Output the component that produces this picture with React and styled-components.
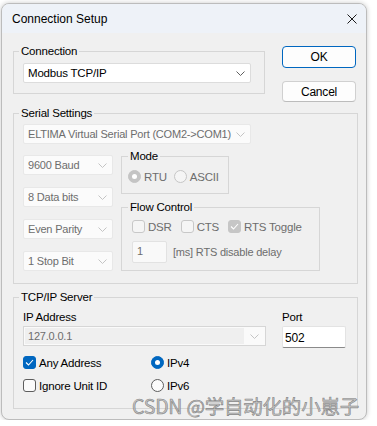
import React from "react";
import styled, { createGlobalStyle } from "styled-components";

const GlobalStyle = createGlobalStyle`
  html, body {
    margin: 0;
    padding: 0;
    background: #ffffff;
  }
  body {
    font-family: "Liberation Sans", Arial, sans-serif;
    font-size: 11px;
    letter-spacing: -0.2px;
    color: #000;
  }
`;

const Window = styled.div`
  position: relative;
  box-sizing: border-box;
  width: 366px;
  height: 417px;
  margin: 3px 0 0 1px;
  border: 1px solid #bcbcbc;
  border-radius: 8px;
  overflow: hidden;
  background: #f0f0f0;
  box-shadow: 0 0 5px rgba(0, 0, 0, 0.22);
`;

const TitleBar = styled.div`
  height: 29px;
  display: flex;
  align-items: center;
  justify-content: space-between;
  padding: 0 9px 0 10px;
  background: #eef2f8;
  font-size: 12px;
  letter-spacing: 0;
`;

const Body = styled.div`
  padding: 11px 0 0 11px;
`;

const TopRow = styled.div`
  display: flex;
  align-items: flex-start;
`;

const Group = styled.fieldset`
  box-sizing: border-box;
  width: ${(p) => p.$w}px;
  margin: ${(p) => p.$mt || 0}px 0 0 0;
  padding: ${(p) => p.$pt || 0}px 0 ${(p) => p.$pb || 0}px ${(p) => p.$pl || 9}px;
  min-width: 0;
  border: 1px solid #d6d6d6;
  border-radius: 0;
`;

const Legend = styled.legend`
  padding: 0 2px;
  margin-left: ${(p) => (p.$ml === undefined ? -4 : p.$ml)}px;
  line-height: 14px;
  font-size: 11.5px;
`;

const Combo = styled.div`
  box-sizing: border-box;
  width: ${(p) => p.$w}px;
  height: 20px;
  display: flex;
  align-items: center;
  justify-content: space-between;
  padding: 0 5px 0 4px;
  background: ${(p) => (p.$disabled ? "#fbfbfb" : "#ffffff")};
  border: 1px solid ${(p) => (p.$disabled ? "#e8e8e8" : "#dcdcdc")};
  border-radius: 2px;
  color: ${(p) => (p.$disabled ? "#6d6d6d" : "#000")};
  font-size: ${(p) => (p.$disabled ? 11 : 11.5)}px;
  white-space: nowrap;
`;

const Buttons = styled.div`
  display: flex;
  flex-direction: column;
  margin-left: 17px;
`;

const Button = styled.div`
  box-sizing: border-box;
  width: 74px;
  height: ${(p) => (p.$primary ? 22 : 21)}px;
  margin-top: ${(p) => (p.$primary ? 2 : 13)}px;
  display: flex;
  align-items: center;
  justify-content: center;
  background: #fdfdfd;
  border: 1px solid ${(p) => (p.$primary ? "#0067c0" : "#d0d0d0")};
  border-bottom-color: ${(p) => (p.$primary ? "#0067c0" : "#bcbcbc")};
  border-radius: 4px;
  font-size: 12px;
`;

const SerialRow = styled.div`
  display: flex;
  align-items: flex-start;
  gap: 8px;
  margin-top: 5px;
`;

const ComboColumn = styled.div`
  display: flex;
  flex-direction: column;
  gap: 12px;
  margin-top: 6px;
`;

const RightColumn = styled.div`
  display: flex;
  flex-direction: column;
`;

const OptionRow = styled.div`
  display: flex;
  align-items: center;
  height: 13px;
`;

const Option = styled.label`
  display: flex;
  align-items: center;
  gap: 3px;
  margin-right: ${(p) => p.$mr || 0}px;
  color: ${(p) => (p.$disabled ? "#6d6d6d" : "#000")};
  font-size: 11.5px;
  white-space: nowrap;
`;

const CheckBox = styled.span`
  box-sizing: border-box;
  width: 13px;
  height: 13px;
  border-radius: 3px;
  display: flex;
  align-items: center;
  justify-content: center;
  border: 1px solid
    ${(p) => (p.$checked ? (p.$disabled ? "#c6c6c6" : "#0067c0") : p.$disabled ? "#c8c8c8" : "#5d5d5d")};
  background: ${(p) => (p.$checked ? (p.$disabled ? "#c6c6c6" : "#0067c0") : p.$disabled ? "#f5f5f5" : "#fbfbfb")};
`;

const Radio = styled.span`
  box-sizing: border-box;
  width: 13px;
  height: 13px;
  border-radius: 50%;
  display: flex;
  align-items: center;
  justify-content: center;
  border: 1px solid
    ${(p) => (p.$checked ? (p.$disabled ? "#c4c4c4" : "#0067c0") : p.$disabled ? "#c6c6c6" : "#5d5d5d")};
  background: ${(p) => (p.$checked ? (p.$disabled ? "#c4c4c4" : "#0067c0") : p.$disabled ? "#f5f5f5" : "#fbfbfb")};

  &::after {
    content: "";
    display: ${(p) => (p.$checked ? "block" : "none")};
    width: 5px;
    height: 5px;
    border-radius: 50%;
    background: #ffffff;
  }
`;

const DelayRow = styled.div`
  display: flex;
  align-items: center;
  gap: 6px;
  margin-top: 8px;
  color: #6d6d6d;
`;

const SmallInput = styled.div`
  box-sizing: border-box;
  width: 35px;
  height: 22px;
  padding: 3px 0 0 4px;
  background: #f9f9f9;
  border: 1px solid #e2e2e2;
  border-radius: 2px;
  color: #6d6d6d;
`;

const AddressLabels = styled.div`
  display: grid;
  grid-template-columns: 243px 64px;
  column-gap: 16px;
  margin-top: 6px;
  line-height: 14px;
  font-size: 11.5px;
`;

const AddressFields = styled.div`
  display: grid;
  grid-template-columns: 243px 64px;
  column-gap: 16px;
  align-items: start;
  margin-top: 2px;
`;

const IpCombo = styled.div`
  box-sizing: border-box;
  height: 20px;
  display: flex;
  border: 1px solid #d6d6d6;
  background: #fafafa;
  color: #6d6d6d;
`;

const IpText = styled.div`
  flex: 1;
  display: flex;
  align-items: center;
  padding-left: 3px;
  margin: 1px 0 1px 1px;
  background: #efefef;
`;

const IpArrow = styled.div`
  width: 21px;
  display: flex;
  align-items: center;
  justify-content: center;
`;

const PortInput = styled.div`
  box-sizing: border-box;
  height: 22px;
  padding: 4px 0 0 2px;
  background: #ffffff;
  border: 1px solid #e3e3e3;
  border-bottom: 1px solid #8a8a8a;
  border-radius: 2px;
  font-size: 12px;
`;

const OptionsGrid = styled.div`
  display: grid;
  grid-template-columns: 128px auto;
  row-gap: 10px;
  margin-top: 8px;
`;

const Watermark = styled.div`
  position: absolute;
  left: 130px;
  top: 390px;
  font-family: "Noto Sans CJK SC", "Noto Sans", sans-serif;
  font-size: 19.5px;
  line-height: 24px;
  letter-spacing: -0.2px;
  color: rgba(190, 190, 190, 0.9);
  -webkit-text-stroke: 0.6px rgba(110, 110, 110, 0.8);
  white-space: nowrap;
`;

function Chevron({ color = "#5f5f5f" }) {
  return (
    <svg width="9" height="5" viewBox="0 0 9 5">
      <polyline points="0.5,0.5 4.5,4.5 8.5,0.5" fill="none" stroke={color} strokeWidth="1" />
    </svg>
  );
}

function Check() {
  return (
    <svg width="9" height="7" viewBox="0 0 9 7">
      <polyline points="1,3.5 3.5,6 8,1" fill="none" stroke="#ffffff" strokeWidth="1.1" />
    </svg>
  );
}

function Select({ w, disabled, children }) {
  return (
    <Combo $w={w} $disabled={disabled}>
      <span>{children}</span>
      <Chevron color={disabled ? "#c4c4c4" : "#5f5f5f"} />
    </Combo>
  );
}

function CheckOption({ checked, disabled, mr, children }) {
  return (
    <Option $disabled={disabled} $mr={mr}>
      <CheckBox $checked={checked} $disabled={disabled}>
        {checked && <Check />}
      </CheckBox>
      {children}
    </Option>
  );
}

function RadioOption({ checked, disabled, mr, children }) {
  return (
    <Option $disabled={disabled} $mr={mr}>
      <Radio $checked={checked} $disabled={disabled} />
      {children}
    </Option>
  );
}

export default function App() {
  return (
    <>
      <GlobalStyle />
      <Window>
        <TitleBar>
          <span>Connection Setup</span>
          <svg width="10" height="10" viewBox="0 0 10 10">
            <path d="M0.5 0.5 L9.5 9.5 M9.5 0.5 L0.5 9.5" stroke="#1b1b1b" strokeWidth="1" />
          </svg>
        </TitleBar>
        <Body>
          <TopRow>
            <Group $w={252} $pt={5} $pb={10}>
              <Legend>Connection</Legend>
              <Select w={228}>Modbus TCP/IP</Select>
            </Group>
            <Buttons>
              <Button $primary>OK</Button>
              <Button>Cancel</Button>
            </Buttons>
          </TopRow>

          <Group $w={345} $mt={4} $pt={4} $pb={12}>
            <Legend>Serial Settings</Legend>
            <Select w={228} disabled>
              ELTIMA Virtual Serial Port (COM2-&gt;COM1)
            </Select>
            <SerialRow>
              <ComboColumn>
                <Select w={90} disabled>9600 Baud</Select>
                <Select w={90} disabled>8 Data bits</Select>
                <Select w={90} disabled>Even Parity</Select>
                <Select w={90} disabled>1 Stop Bit</Select>
              </ComboColumn>
              <RightColumn>
                <Group $w={108} $pl={6} $pt={7} $pb={10}>
                  <Legend $ml={0}>Mode</Legend>
                  <OptionRow>
                    <RadioOption checked disabled mr={7}>RTU</RadioOption>
                    <RadioOption disabled>ASCII</RadioOption>
                  </OptionRow>
                </Group>
                <Group $w={199} $mt={6} $pl={10} $pt={6} $pb={7}>
                  <Legend>Flow Control</Legend>
                  <OptionRow>
                    <CheckOption disabled mr={9}>DSR</CheckOption>
                    <CheckOption disabled mr={9}>CTS</CheckOption>
                    <CheckOption checked disabled>RTS Toggle</CheckOption>
                  </OptionRow>
                  <DelayRow>
                    <SmallInput>1</SmallInput>
                    <span>[ms] RTS disable delay</span>
                  </DelayRow>
                </Group>
              </RightColumn>
            </SerialRow>
          </Group>

          <Group $w={345} $mt={6} $pt={0} $pb={16}>
            <Legend>TCP/IP Server</Legend>
            <AddressLabels>
              <span>IP Address</span>
              <span>Port</span>
            </AddressLabels>
            <AddressFields>
              <IpCombo>
                <IpText>127.0.0.1</IpText>
                <IpArrow>
                  <Chevron color="#c4c4c4" />
                </IpArrow>
              </IpCombo>
              <PortInput>502</PortInput>
            </AddressFields>
            <OptionsGrid>
              <CheckOption checked>Any Address</CheckOption>
              <RadioOption checked>IPv4</RadioOption>
              <CheckOption>Ignore Unit ID</CheckOption>
              <RadioOption>IPv6</RadioOption>
            </OptionsGrid>
          </Group>
        </Body>
        <Watermark>CSDN @学自动化的小崽子</Watermark>
      </Window>
    </>
  );
}
